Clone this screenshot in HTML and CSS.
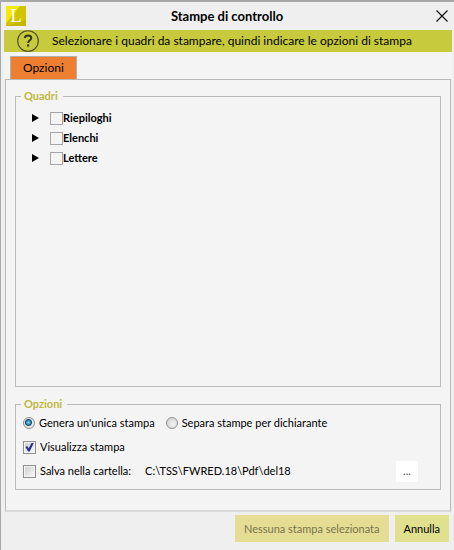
FILE: index.html
```html
<!DOCTYPE html>
<html lang="it">
<head>
    <meta charset="UTF-8">
    <title>Stampe di controllo</title>
    <link rel="stylesheet" href="styles.css">
</head>
<body>
<form class="dialog">
    <header class="titlebar">
        <svg class="logo" viewBox="0 0 20 20" aria-hidden="true">
            <rect width="20" height="20" fill="#f6ea00"/>
            <path d="M20 0V20H0V17L14 0Z" fill="#d3c400"/>
            <path d="M0 20L20 14V20Z" fill="#c5b600"/>
            <text x="10" y="16" class="logo_letter">L</text>
        </svg>
        <h1>Stampe di controllo</h1>
        <button type="button" class="close" aria-label="Chiudi">
            <svg viewBox="0 0 12 12"><path d="M0.5 0.5L11.5 11.5M11.5 0.5L0.5 11.5" fill="none" stroke="#111" stroke-width="1.2"/></svg>
        </button>
    </header>
    <div class="hint">
        <svg class="help" viewBox="0 0 22 22" aria-hidden="true">
            <circle cx="11" cy="11" r="10.3" fill="none" stroke="#4c4d20" stroke-width="1.1"/>
            <path d="M7.7 8.2C7.9 6.2 9.3 5.4 11 5.4C13 5.4 14.3 6.4 14.3 8C14.3 10.3 11.1 10.2 11.1 13" fill="none" stroke="#33341a" stroke-width="2"/>
            <rect x="10" y="14.4" width="2.2" height="2.2" fill="#33341a"/>
        </svg>
        <p>Selezionare i quadri da stampare, quindi indicare le opzioni di stampa</p>
    </div>
    <nav class="tabs">
        <button type="button" class="tab">Opzioni</button>
    </nav>
    <main class="panel">
        <fieldset class="quadri">
            <legend>Quadri</legend>
            <ul class="tree">
                <li>
                    <button type="button" class="expand" aria-label="Espandi Riepiloghi"><svg viewBox="0 0 7 8"><path d="M0 0L7 4L0 8Z"/></svg></button>
                    <input type="checkbox" id="riepiloghi"><label for="riepiloghi">Riepiloghi</label>
                </li>
                <li>
                    <button type="button" class="expand" aria-label="Espandi Elenchi"><svg viewBox="0 0 7 8"><path d="M0 0L7 4L0 8Z"/></svg></button>
                    <input type="checkbox" id="elenchi"><label for="elenchi">Elenchi</label>
                </li>
                <li>
                    <button type="button" class="expand" aria-label="Espandi Lettere"><svg viewBox="0 0 7 8"><path d="M0 0L7 4L0 8Z"/></svg></button>
                    <input type="checkbox" id="lettere"><label for="lettere">Lettere</label>
                </li>
            </ul>
        </fieldset>
        <fieldset class="opzioni">
            <legend>Opzioni</legend>
            <div class="row">
                <input type="radio" name="modo" id="unica" checked><label for="unica">Genera un'unica stampa</label>
                <input type="radio" name="modo" id="separa"><label for="separa">Separa stampe per dichiarante</label>
            </div>
            <div class="row">
                <input type="checkbox" id="visualizza" checked><label for="visualizza">Visualizza stampa</label>
            </div>
            <div class="row">
                <input type="checkbox" id="salva"><label for="salva">Salva nella cartella:</label>
                <span class="path">C:\TSS\FWRED.18\Pdf\del18</span>
                <button type="button" class="browse">...</button>
            </div>
        </fieldset>
    </main>
    <footer class="actions">
        <button type="submit" class="print" disabled>Nessuna stampa selezionata</button>
        <button type="button" class="cancel">Annulla</button>
    </footer>
</form>
</body>
</html>
```
FILE: styles.css
```css
* {
    box-sizing: border-box;
}
body {
    margin: 0;
    font-family: Lato, "Noto Sans", sans-serif;
    font-size: 11px;
    line-height: 16px;
    color: #000;
    background-color: #efefef;
}
button, input {
    margin: 0;
    padding: 0;
    border: 0;
    font: inherit;
    color: inherit;
}
button {
    background: none;
}
svg {
    display: block;
}
.dialog {
    display: flex;
    flex-direction: column;
    min-height: 100vh;
    border-top: 2px solid #a8a8a8;
    border-left: 1px solid #a8a8a8;
}

/* title bar */
.titlebar {
    display: flex;
    align-items: center;
    height: 28px;
    padding: 0 6px 0 5px;
}
.logo {
    width: 20px;
    height: 20px;
}
.logo_letter {
    font-family: "Liberation Serif", serif;
    font-size: 19px;
    text-anchor: middle;
    fill: #fff;
}
h1 {
    flex: 1;
    margin: 0;
    font-size: 13px;
    line-height: 16px;
    text-align: center;
}
.close {
    display: flex;
    justify-content: flex-end;
    width: 20px;
}
.close svg {
    width: 12px;
    height: 12px;
}

/* hint */
.hint {
    display: flex;
    align-items: center;
    gap: 13px;
    height: 22px;
    margin: 0 2px 0 3px;
    padding-left: 13px;
    background-color: #c7ca3c;
    font-size: 12px;
}
.hint p {
    margin: 0;
    white-space: nowrap;
}
.help {
    flex: none;
    width: 22px;
    height: 22px;
}

/* tabs and panel */
.tabs {
    height: 27px;
    margin: 0 2px 0 3px;
    padding: 4px 6px 0;
    background-color: #f4f4f4;
}
.tab {
    height: 23px;
    padding: 0 12px;
    border: 1px solid #b0b0b0;
    border-bottom: 0;
    background-color: #ef7f30;
    font-size: 12px;
}
.panel {
    flex: 1;
    display: flex;
    flex-direction: column;
    gap: 9px;
    margin: 0 3px 0 4px;
    padding: 8px 9px 20px;
    border: 1px solid #b9b9b9;
    border-bottom: 2px solid #d9d9d9;
    background-color: #f4f4f4;
}
fieldset {
    min-width: 0;
    margin: 0;
    padding: 0 7px 7px;
    border: 1px solid #bababa;
}
legend {
    margin-left: -2px;
    padding: 0 5px 0 3px;
    font-weight: bold;
    color: #c0b93f;
}
.quadri {
    flex: 1;
}

/* tree */
.tree {
    margin: 0;
    padding: 4px 0 0 9px;
    list-style: none;
}
.tree li {
    display: flex;
    align-items: center;
    height: 20px;
    font-weight: bold;
}
.expand {
    margin-right: 11px;
}
.expand svg {
    width: 7px;
    height: 8px;
}

/* check boxes and radios */
input {
    appearance: none;
    flex: none;
    width: 13px;
    height: 13px;
    border: 1px solid #a6a6a6;
    background-color: #f4f4f4;
}
.row {
    display: flex;
    align-items: center;
    height: 22px;
    white-space: nowrap;
}
.row + .row {
    margin-top: 2px;
}
.row label {
    margin-left: 4px;
}
.row input {
    border-color: #8e8f8f;
    background: linear-gradient(135deg, #cfd0d2, #f6f6f6) content-box #f4f4f4;
    padding: 1px;
}
.row input[type="radio"] {
    width: 12px;
    height: 12px;
    border-radius: 50%;
    background: radial-gradient(circle at 60% 60%, #f2f2f2, #cbcbcb);
}
.row input[type="radio"]:checked {
    background: radial-gradient(circle at 45% 45%, #8fdcf5 0, #2a8dbb 2px, #174766 3px, #e4e9ec 4px);
}
.row label + input {
    margin-left: 11px;
}
.row input[type="checkbox"]:checked::before {
    content: "";
    display: block;
    width: 9px;
    height: 9px;
    background-color: #2b2f86;
    clip-path: polygon(5% 50%, 25% 40%, 42% 65%, 75% 0, 100% 0, 52% 100%, 35% 100%);
}
.path {
    margin-left: 14px;
}
.browse {
    width: 22px;
    height: 21px;
    margin-left: auto;
    margin-right: 15px;
    background-color: #fff;
    color: #444;
}

/* buttons */
.actions {
    display: flex;
    justify-content: flex-end;
    gap: 6px;
    padding: 3px 5px 8px;
}
.actions button {
    height: 27px;
    padding: 0 9px;
    background-color: #e1e08f;
}
.actions .print {
    background-color: #e5dd93;
    color: #77744b;
}
```
